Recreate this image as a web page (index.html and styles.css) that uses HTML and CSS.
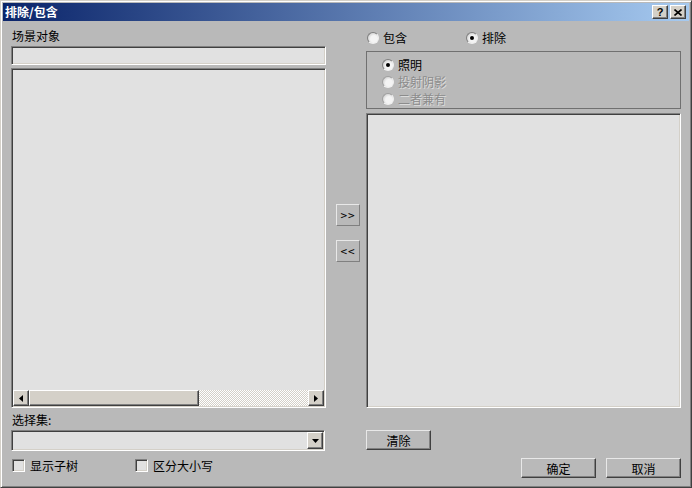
FILE: index.html
```html
<!DOCTYPE html>
<html lang="zh-CN">
<head>
  <meta charset="UTF-8">
  <title>排除/包含</title>
  <link rel="stylesheet" href="styles.css">
</head>
<body>

<div class="window">
  <!-- Title bar -->
  <div class="titlebar">
    <span class="title">排除/包含</span>
    <div class="title-btns">
      <span class="tbtn help">?</span>
      <span class="tbtn">
        <svg width="8" height="7" viewBox="0 0 8 7"><path d="M0.5 0.5 L7.5 6.5 M7.5 0.5 L0.5 6.5" stroke="#000" stroke-width="1.6"/></svg>
      </span>
    </div>
  </div>

  <div class="content">
    <!-- Scene objects -->
    <div class="col-left">
      <div class="label top-label">场景对象</div>
      <div class="field"></div>
      <div class="listbox left-list">
        <div class="list-area"></div>
        <div class="hscroll">
          <span class="sbtn"><svg width="4" height="7" viewBox="0 0 4 7"><path d="M4 0 L0 3.5 L4 7 Z" fill="#000"/></svg></span>
          <span class="thumb"></span>
          <span class="track"></span>
          <span class="sbtn"><svg width="4" height="7" viewBox="0 0 4 7"><path d="M0 0 L4 3.5 L0 7 Z" fill="#000"/></svg></span>
        </div>
      </div>
      <div class="label sel-label">选择集:</div>
      <div class="combo">
        <span class="combo-btn"><svg width="7" height="4" viewBox="0 0 7 4"><path d="M0 0 L7 0 L3.5 4 Z" fill="#000"/></svg></span>
      </div>
      <div class="checks">
        <label class="check"><span class="box"></span>显示子树</label>
        <label class="check"><span class="box"></span>区分大小写</label>
      </div>
    </div>

    <!-- Move buttons -->
    <div class="col-mid">
      <button class="btn arrow-btn">&gt;&gt;</button>
      <button class="btn arrow-btn">&lt;&lt;</button>
    </div>

    <!-- Include / exclude -->
    <div class="col-right">
      <div class="mode-row">
        <span class="radio-item mode-a"><span class="radio"></span>包含</span>
        <span class="radio-item"><span class="radio checked"></span>排除</span>
      </div>
      <div class="group">
        <div class="radio-item"><span class="radio checked"></span>照明</div>
        <div class="radio-item disabled"><span class="radio"></span>投射阴影</div>
        <div class="radio-item disabled"><span class="radio"></span>二者兼有</div>
      </div>
      <div class="listbox right-list"></div>
      <button class="btn clear-btn">清除</button>
      <div class="dlg-btns">
        <button class="btn dlg-btn">确定</button>
        <button class="btn dlg-btn">取消</button>
      </div>
    </div>
  </div>
</div>

</body>
</html>
```

FILE: styles.css
```css
body {
  margin: 0;
  font-family: "Noto Sans CJK SC", "DejaVu Sans", sans-serif;
  font-size: 12px;
  color: #000;
}

.window {
  width: 692px;
  height: 488px;
  box-sizing: border-box;
  padding: 2px;
  background-color: #b9b9b9;
  border: 1px solid;
  border-color: #d4d0c8 #404040 #404040 #d4d0c8;
  box-shadow: inset 1px 1px #fff, inset -1px -1px #808080;
  display: flex;
  flex-direction: column;
}

.titlebar {
  height: 18px;
  display: flex;
  align-items: center;
  justify-content: space-between;
  padding-left: 2px;
  padding-right: 3px;
  background: linear-gradient(to right, #0a246a, #a6caf0);
}

.title {
  color: #fff;
  font-weight: bold;
  line-height: 18px;
}

.title-btns {
  display: flex;
  gap: 2px;
}

.tbtn {
  width: 16px;
  height: 14px;
  box-sizing: border-box;
  display: flex;
  align-items: center;
  justify-content: center;
  background-color: #d4d0c8;
  border: 1px solid;
  border-color: #fff #404040 #404040 #fff;
  box-shadow: inset -1px -1px #808080;
  font-family: "Liberation Sans", sans-serif;
  font-weight: bold;
  font-size: 11px;
  line-height: 12px;
}

.content {
  flex: 1;
  display: flex;
  padding: 0 8px;
}

.col-left,
.col-right {
  width: 315px;
  display: flex;
  flex-direction: column;
}

.col-mid {
  width: 24px;
  margin-left: 10px;
  margin-right: 6px;
  display: flex;
  flex-direction: column;
  gap: 14px;
  padding-top: 183px;
}

.label {
  height: 14px;
  line-height: 14px;
  padding-left: 1px;
}

.top-label {
  margin-top: 8px;
}

.sel-label {
  margin-top: 5px;
}

/* sunken boxes */
.field,
.listbox,
.combo {
  box-sizing: border-box;
  background-color: #e1e1e1;
  border: 1px solid;
  border-color: #808080 #fff #fff #808080;
  box-shadow: inset 1px 1px #404040, inset -1px -1px #d4d0c8;
}

.field {
  height: 19px;
  margin-top: 3px;
}

.left-list {
  height: 340px;
  margin-top: 3px;
  padding: 1px;
  display: flex;
  flex-direction: column;
}

.list-area {
  flex: 1;
}

.hscroll {
  height: 16px;
  display: flex;
}

.sbtn,
.thumb,
.combo-btn {
  box-sizing: border-box;
  background-color: #d4d0c8;
  border: 1px solid;
  border-color: #fff #404040 #404040 #fff;
  box-shadow: inset -1px -1px #808080;
}

.sbtn {
  width: 16px;
  display: flex;
  align-items: center;
  justify-content: center;
}

.thumb {
  width: 170px;
}

.track {
  flex: 1;
  background-color: #d4d0c8;
  background-image: conic-gradient(#fff 25%, #d4d0c8 0 50%, #fff 0 75%, #d4d0c8 0);
  background-size: 2px 2px;
}

.combo {
  height: 21px;
  margin-top: 3px;
  width: 314px;
  display: flex;
  justify-content: flex-end;
  align-items: center;
  padding-right: 1px;
}

.combo-btn {
  width: 16px;
  height: 17px;
  display: flex;
  align-items: center;
  justify-content: center;
}

.checks {
  margin-top: 7px;
  display: flex;
  padding-left: 1px;
}

.check {
  display: flex;
  align-items: center;
  gap: 5px;
  height: 15px;
}

.check + .check {
  margin-left: 57px;
}

.box {
  width: 13px;
  height: 13px;
  box-sizing: border-box;
  background-color: #e1e1e1;
  border: 1px solid;
  border-color: #808080 #fff #fff #808080;
  box-shadow: inset 1px 1px #404040, inset -1px -1px #d4d0c8;
}

/* buttons */
.btn {
  box-sizing: border-box;
  margin: 0;
  padding: 0;
  font-family: inherit;
  font-size: 12px;
  color: #000;
  background-color: #b9b9b9;
  border: 1px solid;
  border-color: #e8e8e8 #404040 #404040 #e8e8e8;
  box-shadow: inset -1px -1px #808080;
}

.arrow-btn {
  width: 24px;
  height: 22px;
  font-family: "DejaVu Sans Mono", monospace;
  font-size: 11px;
  letter-spacing: 1px;
  border-color: #e8e8e8 #808080 #808080 #e8e8e8;
  box-shadow: none;
}

/* right side */
.mode-row {
  margin-top: 10px;
  height: 14px;
  display: flex;
}

.radio-item {
  display: flex;
  align-items: center;
  gap: 4px;
  height: 14px;
  line-height: 14px;
  padding-left: 1px;
}

.mode-a {
  width: 98px;
}

.radio {
  width: 12px;
  height: 12px;
  box-sizing: border-box;
  border-radius: 50%;
  background: radial-gradient(circle at 60% 60%, #f4f4f4 40%, #d8d8d8 70%);
  border: 1px solid;
  border-color: #808080 #f0f0f0 #f0f0f0 #808080;
  display: flex;
  align-items: center;
  justify-content: center;
}

.radio.checked::after {
  content: "";
  width: 4px;
  height: 4px;
  border-radius: 50%;
  background-color: #000;
}

.group {
  margin-top: 6px;
  height: 58px;
  box-sizing: border-box;
  border: 1px solid #707070;
  padding: 6px 0 0 14px;
  display: flex;
  flex-direction: column;
  gap: 3px;
}

.disabled {
  color: #8c8c8c;
  text-shadow: 1px 1px #dcdcdc;
}

.disabled .radio {
  border-color: #a0a0a0 #f0f0f0 #f0f0f0 #a0a0a0;
}

.right-list {
  margin-top: 4px;
  height: 295px;
}

.clear-btn {
  margin-top: 22px;
  width: 65px;
  height: 20px;
}

.dlg-btns {
  margin-top: 8px;
  display: flex;
  justify-content: flex-end;
  gap: 10px;
}

.dlg-btn {
  width: 75px;
  height: 20px;
}
```
